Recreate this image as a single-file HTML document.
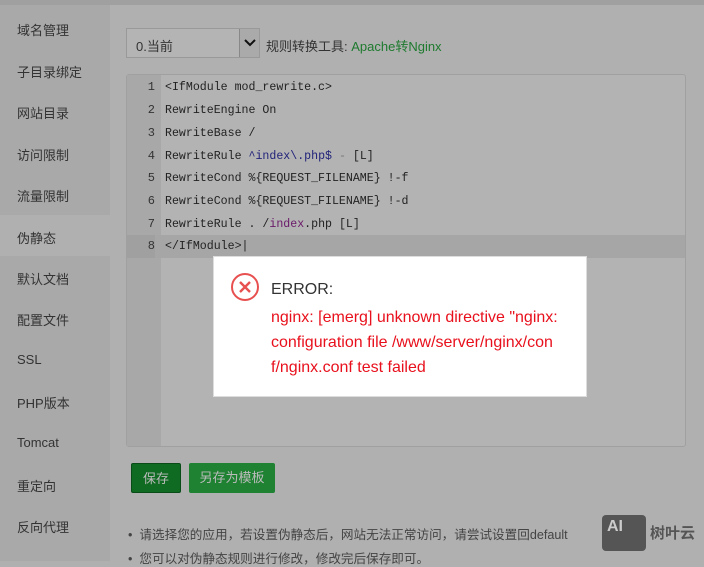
<!DOCTYPE html>
<html><head><meta charset="utf-8"><style>
*{margin:0;padding:0;box-sizing:border-box}
body{width:704px;height:561px;overflow:hidden;background:#b0b0b0;font-family:"Liberation Sans","Noto Sans CJK SC",sans-serif;position:relative;font-size:13px;color:#2a2a2a}
.top{position:absolute;left:0;top:0;width:704px;height:5px;background:#a0a0a0}
.side{position:absolute;left:0;top:5px;width:110px;height:556px;background:#a9a9a9}
.side div{position:absolute;left:17px;font-size:13px;color:#333}
.act{position:absolute;left:0;top:215px;width:110px;height:41px;background:#b0b0b0}
.sel{position:absolute;left:126px;top:28px;width:134px;height:30px;border:1px solid #999;background:#b4b4b4}
.sel span{position:absolute;left:9px;top:7px;font-size:13px;color:#333}
.sel i{position:absolute;right:0;top:0;width:20px;height:28px;border-left:1px solid #888;background:#aaa}
.ed{position:absolute;left:126px;top:74px;width:560px;height:373px;background:#b3b3b3;border:1px solid #a0a0a0;border-radius:3px}
.gut{position:absolute;left:0;top:0;width:34px;height:371px;background:#a8a8a8}
.ln{position:absolute;left:0;width:558px;height:23px;font-family:"Liberation Mono","DejaVu Sans Mono",monospace;font-size:11.6px;line-height:23px;color:#222}
.ln b{display:inline-block;width:28px;text-align:right;font-weight:normal;color:#333;margin-right:10px;font-size:12px}
.hl{background:#a6a6a6}
.dlg{position:absolute;left:213px;top:256px;width:374px;height:141px;background:#fff;border:1px solid #ddd}
.dlg .t{position:absolute;left:57px;top:24px;font-size:16px;color:#333}
.dlg .m{position:absolute;left:57px;top:48px;width:300px;font-size:16px;line-height:25px;color:#e8101c}
.btn{position:absolute;top:463px;height:30px;color:#bbb;font-size:13px;line-height:30px;text-align:center;border-radius:2px}
.li{position:absolute;left:128px;font-size:12.6px;color:#444}
</style></head><body>
<div class="top"></div>
<div class="side">
<div style="top:15px">域名管理</div><div style="top:57px">子目录绑定</div><div style="top:98px">网站目录</div><div style="top:140px">访问限制</div><div style="top:181px">流量限制</div><div style="top:264px">默认文档</div><div style="top:305px">配置文件</div><div style="top:347px">SSL</div><div style="top:388px">PHP版本</div><div style="top:430px">Tomcat</div><div style="top:471px">重定向</div><div style="top:512px">反向代理</div>
</div>
<div class="act"></div>
<div style="position:absolute;left:17px;top:228px;font-size:13px;color:#333">伪静态</div>
<div class="sel"><span>0.当前</span><i><svg width="20" height="28"><path d="M5 11 L10 16 L15 11" stroke="#111" stroke-width="2" fill="none"/></svg></i></div>
<div style="position:absolute;left:266px;top:36px;font-size:13px;color:#333">规则转换工具: <span style="color:#1e7a2e">Apache转Nginx</span></div>
<div class="ed"><div class="gut"></div>
<div class="ln" style="top:1px"><b>1</b>&lt;IfModule mod_rewrite.c&gt;</div>
<div class="ln" style="top:24px"><b>2</b>RewriteEngine On</div>
<div class="ln" style="top:47px"><b>3</b>RewriteBase /</div>
<div class="ln" style="top:70px"><b>4</b>RewriteRule <span style="color:#22237a">^index\.php$</span> <span style="color:#777">-</span> [L]</div>
<div class="ln" style="top:92px"><b>5</b>RewriteCond %{REQUEST_FILENAME} !-f</div>
<div class="ln" style="top:115px"><b>6</b>RewriteCond %{REQUEST_FILENAME} !-d</div>
<div class="ln" style="top:138px"><b>7</b>RewriteRule . /<span style="color:#6a1a6a">index</span>.php [L]</div>
<div class="ln hl" style="top:160px"><b style="background:#a0a0a0">8</b>&lt;/IfModule&gt;|</div>
</div>
<div class="dlg">
<svg style="position:absolute;left:16px;top:15px" width="30" height="30"><circle cx="15" cy="15" r="13" stroke="#e85050" stroke-width="2" fill="none"/><path d="M10 10 L20 20 M20 10 L10 20" stroke="#e85050" stroke-width="2.4"/></svg>
<div class="t">ERROR:</div>
<div class="m">nginx: [emerg] unknown directive "nginx: configuration file /www/server/nginx/con f/nginx.conf test failed</div>
</div>
<div class="btn" style="left:131px;width:50px;background:#0f6a22;border:1px solid #0a4c18">保存</div>
<div class="btn" style="left:189px;width:86px;background:#1e8232">另存为模板</div>
<div class="li" style="top:524px">• &nbsp;请选择您的应用，若设置伪静态后，网站无法正常访问，请尝试设置回default</div>
<div class="li" style="top:548px">• &nbsp;您可以对伪静态规则进行修改，修改完后保存即可。</div>
<div style="position:absolute;left:602px;top:515px;width:44px;height:36px;background:#555;border-radius:4px;color:#ccc;font-weight:bold;font-size:16px;padding:3px 0 0 5px">AI</div>
<div style="position:absolute;left:650px;top:522px;font-size:15px;font-weight:bold;color:#555">树叶云</div>
</body></html>
